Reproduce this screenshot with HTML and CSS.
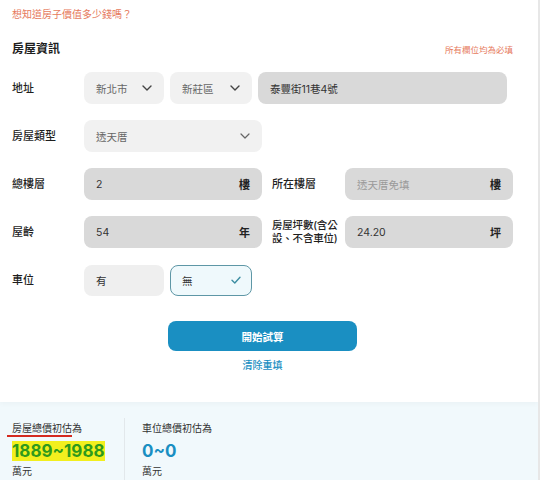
FILE: index.html
```html
<!DOCTYPE html>
<html lang="zh-Hant">
<head>
<meta charset="utf-8">
<link rel="stylesheet" href="styles.css">
</head>
<body>
<div class="page">
  <div class="form">
    <p class="note">想知道房子價值多少錢嗎？</p>
    <div class="head">
      <h2 class="title">房屋資訊</h2>
      <span class="required">所有欄位均為必填</span>
    </div>
    <div class="rows">
      <div class="row">
        <span class="label">地址</span>
        <div class="field select w80"><span>新北市</span><svg class="chev" width="10" height="6" viewBox="0 0 10 6"><polyline points="1,1 5,5 9,1" fill="none" stroke="#444" stroke-width="1.4" stroke-linecap="round" stroke-linejoin="round"/></svg></div>
        <div class="field select w82"><span>新莊區</span><svg class="chev" width="10" height="6" viewBox="0 0 10 6"><polyline points="1,1 5,5 9,1" fill="none" stroke="#444" stroke-width="1.4" stroke-linecap="round" stroke-linejoin="round"/></svg></div>
        <div class="field input w249"><span class="val">泰豐街11巷4號</span></div>
      </div>
      <div class="row">
        <span class="label">房屋類型</span>
        <div class="field select w178"><span>透天厝</span><svg class="chev" width="10" height="6" viewBox="0 0 10 6"><polyline points="1,1 5,5 9,1" fill="none" stroke="#666" stroke-width="1.2" stroke-linecap="round" stroke-linejoin="round"/></svg></div>
      </div>
      <div class="row">
        <div class="half">
          <span class="label">總樓層</span>
          <div class="field input w178"><span class="val">2</span><span class="unit">樓</span></div>
        </div>
        <div class="half">
          <span class="label label-r">所在樓層</span>
          <div class="field input w168"><span class="ph">透天厝免填</span><span class="unit">樓</span></div>
        </div>
      </div>
      <div class="row">
        <div class="half">
          <span class="label">屋齡</span>
          <div class="field input w178"><span class="val">54</span><span class="unit">年</span></div>
        </div>
        <div class="half">
          <span class="label label-r label-tight">房屋坪數(含公設、不含車位)</span>
          <div class="field input w168"><span class="val">24.20</span><span class="unit">坪</span></div>
        </div>
      </div>
      <div class="row">
        <span class="label">車位</span>
        <div class="field choice w80"><span class="val">有</span></div>
        <div class="field choice active w82"><span class="val">無</span><svg width="10" height="8" viewBox="0 0 10 8"><polyline points="1,4.2 3.8,7 9,1.2" fill="none" stroke="#3d8ea2" stroke-width="1.4" stroke-linecap="round" stroke-linejoin="round"/></svg></div>
      </div>
    </div>
    <div class="actions">
      <button class="submit">開始試算</button>
      <a class="reset">清除重填</a>
    </div>
  </div>
  <div class="result">
    <div class="col col-l">
      <div class="r-title"><span class="mark">房屋總價初估為</span></div>
      <div class="r-num"><span class="hl">1889~1988</span></div>
      <div class="r-unit">萬元</div>
    </div>
    <div class="col col-r">
      <div class="r-title">車位總價初估為</div>
      <div class="r-num blue">0~0</div>
      <div class="r-unit">萬元</div>
    </div>
  </div>
</div>
</body>
</html>
```
FILE: styles.css
```css
* { box-sizing: border-box; }
html, body { margin: 0; padding: 0; }
body {
  font-family: Inter, "Noto Sans CJK TC", "Noto Sans", sans-serif;
  color: #222;
  background: #fff;
}
.page {
  width: 540px;
  height: 480px;
  border-right: 2px solid #e7e7e7;
  overflow: hidden;
  display: flex;
  flex-direction: column;
}
.form {
  padding: 8px 25px 31px 12px;
  background: #fff;
  box-shadow: 0 2px 5px rgba(0, 0, 0, 0.03);
  position: relative;
  z-index: 1;
}
.note {
  margin: 0;
  font-size: 10px;
  line-height: 12px;
  color: #e6795c;
}
.head {
  margin-top: 22px;
  display: flex;
  justify-content: space-between;
  align-items: center;
  height: 14px;
}
.title {
  margin: 0;
  font-size: 12px;
  font-weight: 700;
  line-height: 14px;
  color: #1e1e1e;
}
.required {
  font-size: 8.5px;
  color: #e6795c;
}
.rows {
  margin-top: 16px;
  display: flex;
  flex-direction: column;
  gap: 16px;
}
.row {
  display: flex;
  align-items: center;
  gap: 6px;
  height: 32px;
}
.half {
  display: flex;
  align-items: center;
}
.half + .half { margin-left: 4px; }
.label {
  width: 72px;
  flex: none;
  font-size: 11px;
  font-weight: 500;
  color: #1e1e1e;
  line-height: 13px;
}
.row > .label { width: 66px; }
.label-r { width: 73px; }
.label-tight { font-size: 10.5px; letter-spacing: -0.2px; }
.field {
  height: 32px;
  border-radius: 8px;
  display: flex;
  align-items: center;
  justify-content: space-between;
  padding: 0 12px;
  font-size: 10.5px;
  flex: none;
}
.select { background: #f1f1f1; color: #666; }
.select .chev { flex: none; }
.input { background: #d9d9d9; color: #333; }
.choice { background: #efefef; color: #333; height: 31px; }
.choice.active {
  background: #eff9fc;
  border: 1px solid #5e97a6;
  padding: 0 10px 0 11px;
}
.val { color: #333; }
.ph { color: #9a9a9a; }
.unit { font-weight: 600; color: #222; font-size: 11px; }
.w80 { width: 80px; }
.w82 { width: 82px; }
.w249 { width: 249px; }
.w178 { width: 178px; }
.w168 { width: 168px; }
.actions {
  display: flex;
  flex-direction: column;
  align-items: center;
}
.submit {
  margin-top: 25px;
  width: 189px;
  height: 30px;
  border: none;
  border-radius: 8px;
  background: #1a8fc2;
  color: #fff;
  font-family: inherit;
  font-size: 10.5px;
  font-weight: 700;
}
.reset {
  margin-top: 8px;
  font-size: 10px;
  line-height: 12px;
  color: #1a8fc2;
  font-weight: 500;
}
.result {
  flex: 1;
  background: #f1f9fc;
  display: flex;
  padding: 16px 0 0 12px;
}
.col { padding-top: 4px; }
.col-l { width: 112px; }
.col-r {
  border-left: 1px solid #e2e8eb;
  padding-left: 17px;
}
.r-title {
  font-size: 10px;
  line-height: 12px;
  color: #333;
}
.mark { position: relative; }
.mark::after {
  content: "";
  position: absolute;
  left: -5px;
  width: 65px;
  bottom: -3px;
  height: 2px;
  background: #d42a1f;
}
.r-num {
  margin-top: 7px;
  font-size: 17px;
  line-height: 20px;
  font-weight: 700;
  color: #2e9a1c;
}
.hl { background: #f2ef1e; }
.blue { color: #1a8fc2; }
.r-unit {
  margin-top: 4px;
  font-size: 10px;
  line-height: 12px;
  color: #333;
}
```
